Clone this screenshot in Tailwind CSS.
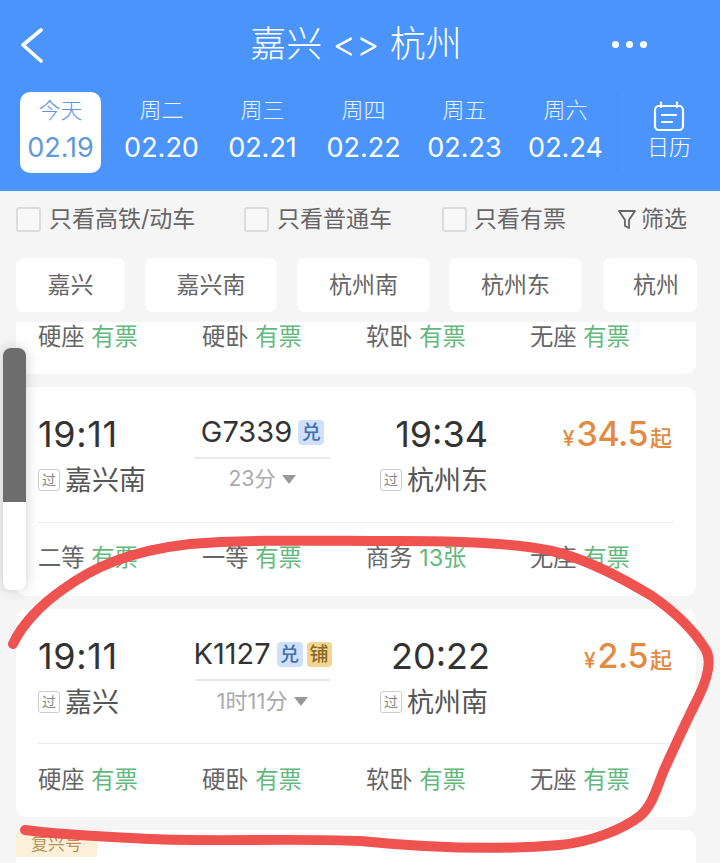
<!DOCTYPE html>
<html lang="zh-CN">
<head>
    <meta charset="utf-8">
    <meta name="viewport" content="width=device-width, initial-scale=1.0">
    <title>嘉兴 - 杭州</title>
    <script src="https://cdn.jsdelivr.net/npm/@tailwindcss/browser@4"></script>
</head>
<body class="font-['Inter','Noto_Sans_CJK_SC',sans-serif]">
<div class="relative w-[720px] h-[863px] overflow-hidden bg-[#f5f5f6]">

    <!-- Header -->
    <header class="h-[191px] bg-[#4a94fb] text-white">
        <div class="h-[92px] flex items-center justify-between pl-[20px] pr-[73px]">
            <svg width="24" height="36" viewBox="0 0 24 36" fill="none" stroke="white" stroke-width="3.6" stroke-linecap="round" stroke-linejoin="round"><path d="M21 2 L3 17 L21 33"/></svg>
            <div class="ml-[56px] text-[36px] font-light leading-[44px] mt-[-4px]">嘉兴 &lt;&gt; 杭州</div>
            <div class="flex gap-[7px] mt-[-4px]">
                <span class="w-[7px] h-[7px] rounded-full bg-white"></span>
                <span class="w-[7px] h-[7px] rounded-full bg-white"></span>
                <span class="w-[7px] h-[7px] rounded-full bg-white"></span>
            </div>
        </div>
        <div class="flex pl-[10px]">
            <div class="w-[101px] flex justify-center">
                <div class="w-[81px] h-[81px] rounded-[10px] bg-white text-[#5f98da] flex flex-col items-center pt-[3px]">
                    <span class="text-[22px] leading-[30px] font-light">今天</span>
                    <span class="mt-[5px] text-[27px] leading-[36px]">02.19</span>
                </div>
            </div>
            <div class="w-[101px] flex flex-col items-center pt-[3px]"><span class="text-[22px] leading-[30px] font-light text-white/90">周二</span><span class="mt-[5px] text-[27px] leading-[36px]">02.20</span></div>
            <div class="w-[101px] flex flex-col items-center pt-[3px]"><span class="text-[22px] leading-[30px] font-light text-white/90">周三</span><span class="mt-[5px] text-[27px] leading-[36px]">02.21</span></div>
            <div class="w-[101px] flex flex-col items-center pt-[3px]"><span class="text-[22px] leading-[30px] font-light text-white/90">周四</span><span class="mt-[5px] text-[27px] leading-[36px]">02.22</span></div>
            <div class="w-[101px] flex flex-col items-center pt-[3px]"><span class="text-[22px] leading-[30px] font-light text-white/90">周五</span><span class="mt-[5px] text-[27px] leading-[36px]">02.23</span></div>
            <div class="w-[101px] flex flex-col items-center pt-[3px]"><span class="text-[22px] leading-[30px] font-light text-white/90">周六</span><span class="mt-[5px] text-[27px] leading-[36px]">02.24</span></div>
            <div class="ml-[1px] w-[103px] h-[80px] border-l border-[#4a8ef2] flex flex-col items-center pt-[9px]">
                <svg width="32" height="30" viewBox="0 0 32 30" fill="none" stroke="white" stroke-width="2.2" stroke-linecap="round"><rect x="2" y="5" width="28" height="24" rx="4"/><path d="M8 1.5 V6 M24 1.5 V6 M9 14 H23 M9 21 H19"/></svg>
                <span class="text-[22px] leading-[30px] font-light mt-[1px]">日历</span>
            </div>
        </div>
    </header>

    <!-- Filters -->
    <div class="h-[56px] flex items-center pl-[16px] text-[23px] text-[#666] pt-[1px]">
        <span class="w-[25px] h-[25px] rounded-[3px] border-2 border-[#dcdcdc] bg-[#f8f8f8]"></span>
        <span class="ml-[8px] w-[195px]">只看高铁/动车</span>
        <span class="w-[25px] h-[25px] rounded-[3px] border-2 border-[#dcdcdc] bg-[#f8f8f8]"></span>
        <span class="ml-[8px] w-[165px]">只看普通车</span>
        <span class="w-[25px] h-[25px] rounded-[3px] border-2 border-[#dcdcdc] bg-[#f8f8f8]"></span>
        <span class="ml-[7px] w-[144px]">只看有票</span>
        <svg width="18" height="21" viewBox="0 0 18 21" fill="none" stroke="#666" stroke-width="1.8" stroke-linejoin="round"><path d="M1 2 H17 L11 11 V19 L7 17 V11 Z"/></svg>
        <span class="ml-[5px]">筛选</span>
    </div>

    <!-- Station chips -->
    <div class="mt-[11px] flex pl-[16px] text-[23px] text-[#666] leading-[54px] text-center">
        <span class="w-[109px] h-[54px] rounded-[8px] bg-white">嘉兴</span>
        <span class="ml-[20px] w-[132px] h-[54px] rounded-[8px] bg-white">嘉兴南</span>
        <span class="ml-[20px] w-[133px] h-[54px] rounded-[8px] bg-white">杭州南</span>
        <span class="ml-[19px] w-[133px] h-[54px] rounded-[8px] bg-white">杭州东</span>
        <span class="ml-[21px] w-[94px] h-[54px] rounded-[8px] bg-white pl-[12px]">杭州</span>
    </div>

    <!-- Train list -->
    <div class="mt-[10px] ml-[16px] w-[680px] flex flex-col gap-[13px]">
        <div class="h-[52px] rounded-b-[10px] bg-white pl-[22px] pt-0">
            <div class="grid grid-cols-[164px_164px_164px_164px] text-[23.3px] leading-[30px] text-[#666]">
                <span>硬座 <span class="text-[#62b87d]">有票</span></span>
                <span>硬卧 <span class="text-[#62b87d]">有票</span></span>
                <span>软卧 <span class="text-[#62b87d]">有票</span></span>
                <span>无座 <span class="text-[#62b87d]">有票</span></span>
            </div>
        </div>

        <div class="h-[209px] rounded-[10px] bg-white px-[22px] pt-[27px]">
            <div class="grid grid-cols-[142px_165px_143px_186px] h-[86px]">
                <div>
                    <div class="text-[36px] leading-[40px] text-[#333] tracking-[0.6px]">19:11</div>
                    <div class="mt-[6px] flex items-center h-[40px]">
                        <span class="w-[22px] h-[22px] rounded-[3px] border border-[#ccc] text-[14px] leading-[20px] text-center text-[#888]">过</span>
                        <span class="ml-[5px] mt-[3px] text-[27px] text-[#555]">嘉兴南</span>
                    </div>
                </div>
                <div class="flex flex-col items-center">
                    <div class="h-[36px] flex items-center">
                        <span class="text-[29px] text-[#333]">G7339</span>
                        <span class="ml-[6px] w-[26px] h-[25px] rounded-[4px] bg-[#cfe0f8] text-[#3f6fb0] text-[19px] leading-[25px] text-center font-medium">兑</span>
                    </div>
                    <div class="mt-[7px] w-[135px] h-[2px] bg-[#e8e8e8]"></div>
                    <div class="h-[40px] flex items-center gap-[7px] text-[21px] text-[#aaa]">23分<span class="w-0 h-0 border-x-[7px] border-t-[9px] border-x-transparent border-t-[#999]"></span></div>
                </div>
                <div class="flex flex-col items-end">
                    <div class="text-[36px] leading-[40px] text-[#333]">19:34</div>
                    <div class="mt-[6px] flex items-center h-[40px]">
                        <span class="w-[22px] h-[22px] rounded-[3px] border border-[#ccc] text-[14px] leading-[20px] text-center text-[#888]">过</span>
                        <span class="ml-[5px] mt-[3px] text-[27px] text-[#555]">杭州东</span>
                    </div>
                </div>
                <div class="h-[40px] flex items-baseline justify-end pr-[2px] text-[#e28a3f]">
                    <span class="text-[21px] font-medium">¥</span><span class="text-[34px] leading-[40px] ml-[2px] font-medium tracking-[-0.5px]">34.5</span><span class="ml-[2px] text-[22px] font-medium">起</span>
                </div>
            </div>
            <div class="mt-[22px] h-px bg-[#ececec]"></div>
            <div class="mt-[18px] grid grid-cols-[164px_164px_164px_164px] text-[23.3px] leading-[34px] text-[#666]">
                <span>二等 <span class="text-[#62b87d]">有票</span></span>
                <span>一等 <span class="text-[#62b87d]">有票</span></span>
                <span>商务 <span class="text-[#62b87d]">13张</span></span>
                <span>无座 <span class="text-[#62b87d]">有票</span></span>
            </div>
        </div>

        <div class="h-[208px] rounded-[10px] bg-white px-[22px] pt-[27px]">
            <div class="grid grid-cols-[142px_165px_143px_186px] h-[86px]">
                <div>
                    <div class="text-[36px] leading-[40px] text-[#333] tracking-[0.6px]">19:11</div>
                    <div class="mt-[6px] flex items-center h-[40px]">
                        <span class="w-[22px] h-[22px] rounded-[3px] border border-[#ccc] text-[14px] leading-[20px] text-center text-[#888]">过</span>
                        <span class="ml-[5px] mt-[3px] text-[27px] text-[#555]">嘉兴</span>
                    </div>
                </div>
                <div class="flex flex-col items-center">
                    <div class="h-[36px] flex items-center">
                        <span class="text-[29px] text-[#333]">K1127</span>
                        <span class="ml-[6px] w-[26px] h-[25px] rounded-[4px] bg-[#cfe0f8] text-[#3f6fb0] text-[19px] leading-[25px] text-center font-medium">兑</span>
                        <span class="ml-[4px] w-[25px] h-[25px] rounded-[4px] bg-[#f3d591] text-[#8c6a2c] text-[19px] leading-[25px] text-center font-medium">铺</span>
                    </div>
                    <div class="mt-[7px] w-[135px] h-[2px] bg-[#e8e8e8]"></div>
                    <div class="h-[40px] flex items-center gap-[7px] text-[22px] text-[#aaa]">1时11分<span class="w-0 h-0 border-x-[7px] border-t-[9px] border-x-transparent border-t-[#999]"></span></div>
                </div>
                <div class="flex flex-col items-end">
                    <div class="text-[36px] leading-[40px] text-[#333] mr-[-2px]">20:22</div>
                    <div class="mt-[6px] flex items-center h-[40px]">
                        <span class="w-[22px] h-[22px] rounded-[3px] border border-[#ccc] text-[14px] leading-[20px] text-center text-[#888]">过</span>
                        <span class="ml-[5px] mt-[3px] text-[27px] text-[#555]">杭州南</span>
                    </div>
                </div>
                <div class="h-[40px] flex items-baseline justify-end pr-[2px] text-[#e28a3f]">
                    <span class="text-[21px] font-medium">¥</span><span class="text-[34px] leading-[40px] ml-[2px] font-medium tracking-[-0.5px]">2.5</span><span class="ml-[2px] text-[22px] font-medium">起</span>
                </div>
            </div>
            <div class="mt-[21px] h-px bg-[#ececec]"></div>
            <div class="mt-[19px] grid grid-cols-[164px_164px_164px_164px] text-[23.3px] leading-[34px] text-[#666]">
                <span>硬座 <span class="text-[#62b87d]">有票</span></span>
                <span>硬卧 <span class="text-[#62b87d]">有票</span></span>
                <span>软卧 <span class="text-[#62b87d]">有票</span></span>
                <span>无座 <span class="text-[#62b87d]">有票</span></span>
            </div>
        </div>

        <div class="h-[60px] rounded-t-[10px] bg-white pt-[2px]">
            <span class="block w-[81px] h-[25px] bg-[#fdf0d9] text-[#b5935f] text-[17px] leading-[25px] text-center">复兴号</span>
        </div>
    </div>

    <!-- Scroll handle over the list -->
    <div class="absolute left-[3px] top-[348px] w-[23px] h-[242px] rounded-[8px] bg-white shadow-[0_0_14px_rgba(0,0,0,0.18)] overflow-hidden">
        <div class="h-[154px] bg-[#6d6d6d]"></div>
    </div>

    <!-- Red hand-drawn ring -->
    <svg class="absolute left-0 top-0" width="720" height="863" viewBox="0 0 720 863" fill="none">
        <path d="M13 644 C22 624 42 604 62 590 C92 568 128 551 190 544 C250 539 320 541 400 541 C450 541 510 542 552 551 C590 560 625 580 652 596 C675 612 695 632 706 650 C712 662 708 678 698 698 C688 718 674 748 664 770 C656 790 652 806 640 816 C622 830 590 842 560 845 C500 850 430 848 360 841 C290 838 220 842 150 839 C110 837 60 835 25 830" stroke="#ef5350" stroke-width="10" stroke-linecap="round" stroke-linejoin="round"/>
    </svg>
</div>
</body>
</html>
